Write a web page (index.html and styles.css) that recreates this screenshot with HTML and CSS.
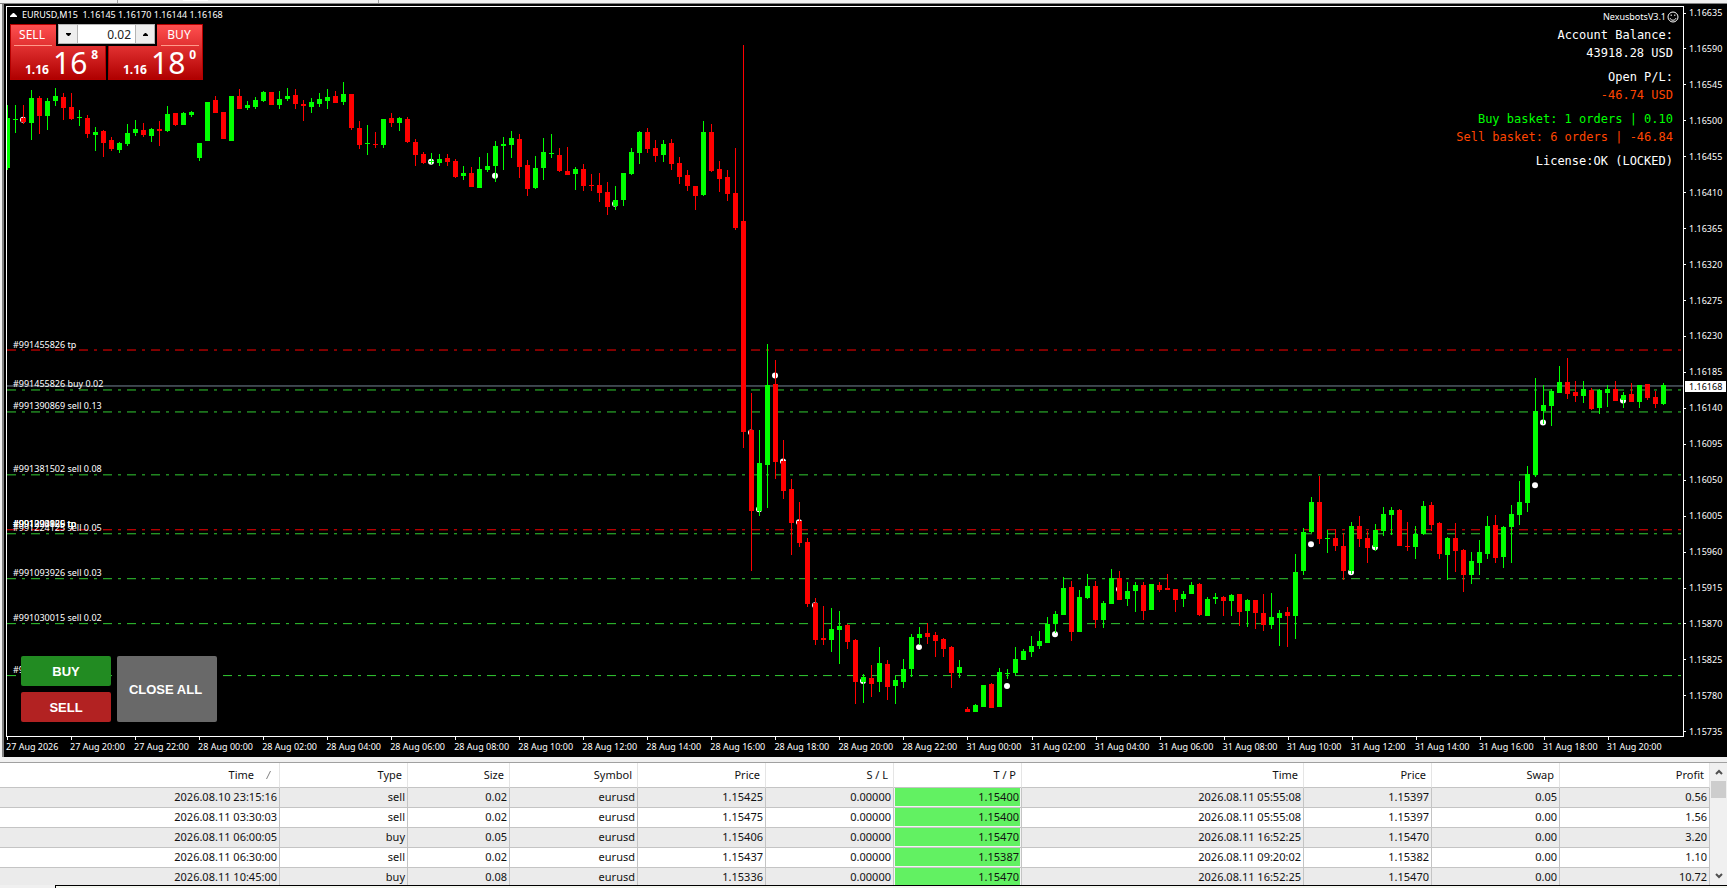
FILE: index.html
```html
<!DOCTYPE html>
<html lang="en">
<head>
<meta charset="utf-8">
<title>EURUSD,M15</title>
<link rel="stylesheet" href="styles.css">
</head>
<body>
<div class="app">
  <div class="tabstrip"><span class="tabstrip-a"></span><span class="tabstrip-b"></span><span class="tabstrip-active"></span><span class="tabstrip-c"></span></div>
  <main class="chart">
    <section class="plot" id="plot">
      <svg class="candles" id="candles" viewBox="7 7 1676 730" preserveAspectRatio="none" aria-hidden="true"></svg>
      <h1 class="title"><svg class="title-arrow" viewBox="0 0 7 4" aria-hidden="true"><path d="M3 0h1l3 3v1H0V3z"/></svg><span class="title-text">EURUSD,M15&nbsp; 1.16145 1.16170 1.16144 1.16168</span></h1>
      <div class="oneclick">
        <button class="side"><span class="side-name">SELL</span><span class="quote"><span class="q-small">1.16</span><span class="q-big">16</span><span class="q-sup">8</span></span></button>
        <button class="side side-buy"><span class="side-name">BUY</span><span class="quote"><span class="q-small">1.16</span><span class="q-big">18</span><span class="q-sup">0</span></span></button>
        <div class="volume">
          <button class="step" aria-label="Decrease volume"><svg viewBox="0 0 5 3" width="5" height="3"><path d="M0 0h5v1L3 3H2L0 1z"/></svg></button>
          <input class="volume-input" type="text" value="0.02" aria-label="Volume">
          <button class="step" aria-label="Increase volume"><svg viewBox="0 0 5 3" width="5" height="3"><path d="M0 3h5V2L3 0H2L0 2z"/></svg></button>
        </div>
      </div>
      <div class="account">
        <p class="bot">NexusbotsV3.1<svg class="smiley" viewBox="0 0 12 12" aria-hidden="true"><circle cx="6" cy="6" r="5"/><path d="M3 7.2c.6 1.4 1.7 2 3 2s2.400-.6 3-2"/><path d="M4.200 3.500v1.500M7.800 3.500v1.500"/></svg></p>
        <p class="stat"><span>Account Balance:</span><span>43918.28 USD</span></p>
        <p class="stat"><span>Open P/L:</span><span class="loss">-46.74 USD</span></p>
        <p class="stat"><span class="gain">Buy basket: 1 orders | 0.10</span><span class="loss">Sell basket: 6 orders | -46.84</span></p>
        <p class="stat"><span>License:OK (LOCKED)</span></p>
      </div>
      <div class="actions">
        <button class="action action-buy">BUY</button>
        <button class="action action-close">CLOSE ALL</button>
        <button class="action action-sell">SELL</button>
      </div>
    </section>
    <div class="prices" id="prices"></div>
    <div class="times" id="times"></div>
  </main>
  <section class="history">
    <div class="table-clip">
    <table class="trades">
      <colgroup><col class="c-open"><col class="c-std"><col class="c-size"><col class="c-std"><col class="c-std"><col class="c-std"><col class="c-std"><col><col class="c-std"><col class="c-std"><col class="c-profit"></colgroup>
      <thead><tr><th class="sorted">Time<svg class="sort" viewBox="0 0 5 8" aria-hidden="true"><path d="M.5 8 4.500 0"/></svg></th><th>Type</th><th>Size</th><th>Symbol</th><th>Price</th><th>S / L</th><th>T / P</th><th>Time</th><th>Price</th><th>Swap</th><th>Profit</th></tr></thead>
      <tbody>
        <tr><td>2026.08.10 23:15:16</td><td>sell</td><td>0.02</td><td>eurusd</td><td>1.15425</td><td>0.00000</td><td class="hit">1.15400</td><td>2026.08.11 05:55:08</td><td>1.15397</td><td>0.05</td><td>0.56</td></tr>
        <tr><td>2026.08.11 03:30:03</td><td>sell</td><td>0.02</td><td>eurusd</td><td>1.15475</td><td>0.00000</td><td class="hit">1.15400</td><td>2026.08.11 05:55:08</td><td>1.15397</td><td>0.00</td><td>1.56</td></tr>
        <tr><td>2026.08.11 06:00:05</td><td>buy</td><td>0.05</td><td>eurusd</td><td>1.15406</td><td>0.00000</td><td class="hit">1.15470</td><td>2026.08.11 16:52:25</td><td>1.15470</td><td>0.00</td><td>3.20</td></tr>
        <tr><td>2026.08.11 06:30:00</td><td>sell</td><td>0.02</td><td>eurusd</td><td>1.15437</td><td>0.00000</td><td class="hit">1.15387</td><td>2026.08.11 09:20:02</td><td>1.15382</td><td>0.00</td><td>1.10</td></tr>
        <tr><td>2026.08.11 10:45:00</td><td>buy</td><td>0.08</td><td>eurusd</td><td>1.15336</td><td>0.00000</td><td class="hit">1.15470</td><td>2026.08.11 16:52:25</td><td>1.15470</td><td>0.00</td><td>10.72</td></tr>
      </tbody>
    </table>
    </div>
    <div class="scroll">
      <button class="scroll-btn" aria-label="Scroll up"><svg viewBox="0 0 8 6" width="8" height="6"><path d="M1 5l3-3 3 3"/></svg></button>
      <span class="thumb"></span>
      <button class="scroll-btn scroll-down" aria-label="Scroll down"><svg viewBox="0 0 8 6" width="8" height="6"><path d="M1 1l3 3 3-3"/></svg></button>
    </div>
  </section>
  <div class="foot"></div>
</div>
<script src="chart.js"></script>
</body>
</html>
```
FILE: chart.js
```js
// Each bar: direction (G up, R down), high, body top, body bottom, low.
const bars = `G105 118 168 170,G105 119 120 133,R105 118 122 124,G90 98 123 140,R96 98 116 134,G98 101 116 130,G88 96 101 106,R93 97 108 120,R93 107 119 120,G110 117 118 126,
R115 118 134 138,G127 132 135 151,R130 131 143 157,R137 140 149 151,G142 143 150 153,G124 133 144 146,G120 129 133 136,R123 130 135 137,G128 129 136 142,R121 129 131 146,
G106 114 131 132,R113 113 125 126,G112 113 125 125,G111 112 115 117,G143 143 158 161,G102 102 141 141,R96 100 113 113,R112 112 139 139,G96 96 141 141,R89 96 109 109,
G101 105 108 110,G97 100 107 109,G91 92 101 102,R92 92 105 105,G91 99 105 109,G88 96 99 101,R89 95 104 109,R100 104 106 121,G98 102 107 113,G93 99 104 107,
G89 97 101 109,R91 96 103 103,G82 94 102 105,R94 94 128 130,R121 128 145 149,G125 143 144 155,R132 144 145 148,G119 119 145 148,R113 118 123 127,G117 118 123 131,
R117 119 142 143,R139 142 155 166,R152 154 163 164,G153 161 162 164,G154 159 163 166,R154 158 162 166,R159 161 177 178,G166 173 176 180,R167 173 187 187,G157 169 188 188,
G153 166 170 172,G141 146 166 182,G137 144 146 170,G131 138 145 158,R134 139 167 178,R160 165 189 196,G156 168 188 189,G138 152 168 180,G134 153 154 158,R148 155 171 172,
R147 171 175 175,G167 169 174 190,R164 169 186 191,R174 185 186 191,R173 185 193 202,R182 192 207 215,G186 200 206 210,G173 173 200 206,G148 152 174 175,G131 132 153 164,
R128 132 149 153,R140 148 156 162,G140 144 155 162,R139 143 164 170,R157 163 177 184,R170 175 186 191,R186 186 196 210,G121 132 195 196,R124 132 171 172,R161 169 179 192,
R170 177 194 201,R148 193 228 230,R45 221 433 449,R394 431 512 572,G431 464 512 517,G344 386 466 509,R360 385 463 480,R441 462 492 500,R480 490 524 556,R503 522 544 548,
R539 543 605 608,R599 604 641 646,R607 639 641 646,G609 630 641 653,G612 627 631 665,R625 626 643 650,R640 641 683 705,G675 678 683 704,R666 679 685 698,G648 664 683 693,
R661 665 688 701,G677 681 687 705,G660 670 683 689,G635 638 670 678,G628 635 639 646,R624 634 638 645,R633 636 642 658,R639 640 650 658,R647 648 674 689,G661 668 674 679,
R708 710 713 713,G705 706 713 713,G686 686 708 708,R684 685 709 709,G669 673 708 708,G670 674 675 680,G648 660 674 676,G650 652 661 661,G637 647 653 658,G632 642 647 650,
G618 625 644 644,G612 615 625 634,G578 589 616 616,R582 588 633 642,G591 598 633 633,G575 587 599 600,R582 587 621 629,G602 604 621 629,G570 579 605 605,R572 579 601 601,
G583 592 600 607,G583 586 592 613,R583 586 612 621,G585 585 611 611,R583 586 591 593,R575 589 591 591,R590 590 601 613,G592 595 600 608,G583 586 595 595,R584 585 616 617,
G598 600 617 617,G594 598 600 605,R597 598 602 617,G595 596 602 617,R595 595 613 627,G600 601 612 628,R601 601 614 630,R595 614 626 632,G594 618 626 630,G611 614 619 647,
R608 613 617 648,G555 573 617 640,G529 533 572 576,G498 503 533 534,R477 503 540 545,G531 539 540 554,R530 539 547 552,R534 547 572 581,G523 527 572 575,R517 527 540 548,
R532 539 549 564,G525 531 548 552,G508 515 532 537,G508 511 516 536,R510 511 547 547,R523 547 548 552,G527 535 548 560,G502 507 535 536,R503 506 526 532,R523 524 555 560,
G538 539 556 581,R524 539 552 573,R550 551 576 593,G553 562 576 585,G541 553 564 576,G517 527 555 560,R516 526 559 564,G527 528 558 569,G506 515 528 564,G482 503 516 526,
G467 475 504 513,G379 412 476 478,G386 406 412 425,G390 392 407 427,G366 383 394 394,R358 383 395 400,R382 393 397 403,G382 390 397 404,R389 391 410 411,G390 391 409 415,
G386 390 394 408,R382 390 402 402,G393 396 401 409,R384 395 403 403,G386 386 403 409,R385 385 399 401,R392 398 405 409,G384 386 405 406`.replace(/\n/g, '').split(',');

// Signal dots: bar index, y.
const dots = [[2,120],[53,162],[61,176],[76,204],[93,433],[94,510],[96,376],[97,462],[99,523],[101,606],[107,682],[114,648],[125,687],[131,635],[139,590],[163,545],[168,573],[171,548],[191,486],[192,423],[202,401]];

// Order levels: y, line colour, captions.
const levels = [
  [350, 'red', ['#991455826 tp']],
  [390, 'limegreen', ['#991455826 buy 0.02']],
  [412, 'limegreen', ['#991390869 sell 0.13']],
  [475, 'limegreen', ['#991381502 sell 0.08']],
  [534, 'limegreen', ['#991224125 sell 0.05']],
  [530, 'red', ['#991390869 tp', '#991093926 tp', '#991224125 tp']],
  [579, 'limegreen', ['#991093926 sell 0.03']],
  [624, 'limegreen', ['#991030015 sell 0.02']],
  [676, 'limegreen', ['#990986412 sell 0.01']]
];

const barX = i => 7 + i * 8;
let art = '<path class="bid" d="M7 386.5H1683"/>';
for (const [y, color] of levels) art += `<path class="level" stroke="${color}" d="M7 ${y}.5H1682"/>`;
for (const [i, y] of dots) art += `<circle class="dot" cx="${barX(i)}" cy="${y}" r="3"/>`;
bars.forEach((bar, i) => {
  const [high, top, bottom, low] = bar.slice(1).split(' ').map(Number);
  const x = barX(i);
  art += `<path class="${bar[0] === 'G' ? 'up' : 'down'}" d="M${x} ${high}h1V${low}h-1zM${x - 2} ${top}h5V${bottom}h-5z"/>`;
});
document.getElementById('candles').innerHTML = art;

const plot = document.getElementById('plot');
for (const [y, , captions] of levels) {
  for (const text of captions) {
    const label = document.createElement('span');
    label.className = 'order';
    label.textContent = text;
    label.style.top = `${(y - 6) / 730 * 100}%`;
    plot.insertBefore(label, plot.children[1]);
  }
}

const prices = document.getElementById('prices');
for (let i = 0; i < 21; i++) {
  const label = document.createElement('span');
  label.className = 'price';
  label.textContent = ((116635 - i * 45) / 100000).toFixed(5);
  prices.append(label);
}
const bid = document.createElement('span');
bid.className = 'price-now';
bid.textContent = '1.16168';
bid.style.top = `${(386 - 6) / 732 * 100}%`;
prices.append(bid);

const times = document.getElementById('times');
const stamps = ['27 Aug 2026', '27 Aug 20:00', '27 Aug 22:00'];
for (let h = 0; h < 24; h += 2) stamps.push(`28 Aug ${String(h).padStart(2, '0')}:00`);
for (let h = 0; h < 22; h += 2) stamps.push(`31 Aug ${String(h).padStart(2, '0')}:00`);
for (const text of stamps) {
  const label = document.createElement('span');
  label.className = 'time';
  label.textContent = text;
  times.append(label);
}
```
FILE: styles.css
```css
* { box-sizing: border-box; }
body { margin: 0; font-family: "Noto Sans", "Open Sans", sans-serif; background: #f0f0f0; }
button, input { font: inherit; margin: 0; padding: 0; border: 0; border-radius: 0; }
p, h1 { margin: 0; font-weight: 400; }

.app { display: flex; flex-direction: column; height: 100vh; overflow: hidden; }

.tabstrip { display: flex; flex: none; height: 4px; background: #f0f0f0; border-bottom: 1px solid #828282; }
.tabstrip-a { width: 118px; border-right: 1px solid #a0a0a0; }
.tabstrip-b { width: 65px; }
.tabstrip-active { width: 25px; height: 1px; background: #fff; }
.tabstrip-c { width: 171px; border-right: 1px solid #a0a0a0; }

.chart {
  flex: 1; min-height: 0; display: grid;
  grid-template-columns: minmax(0, 1fr) 43px;
  grid-template-rows: minmax(0, 1fr) 20px;
  padding: 2px 0 0 2px; margin-left: 2px;
  background: #000; color: #fff; border-left: 2px solid #828282;
  font-size: 9px; line-height: 12px;
}
.plot { position: relative; border: 1px solid #fff; min-width: 0; overflow: hidden; }
.candles { position: absolute; inset: 0; width: 100%; height: 100%; shape-rendering: crispEdges; }
.up { fill: #0f0; }
.down { fill: #f00; }
.dot { fill: #fff; shape-rendering: auto; }
.bid { stroke: #778899; fill: none; }
.level { fill: none; stroke-dasharray: 9 6 3 6; }
.order { position: absolute; left: 6px; transform: translateY(-100%); white-space: nowrap; }

.title { position: relative; display: flex; align-items: center; gap: 5px; height: 16px; padding-left: 3px; font-size: 9px; }
.title-arrow { width: 7px; height: 4px; fill: #fff; }

.oneclick { position: absolute; left: 3px; top: 17px; width: 193px; display: grid; grid-template-columns: 96px 95px; gap: 2px; background: #000; }
.side {
  display: flex; flex-direction: column; height: 56px; padding: 0 3px; color: #fff;
  background: linear-gradient(#ff4f4f, #e03030 40%, #b00000); border: 1px solid #b40000;
}
.side-name { width: 38px; height: 21px; padding-right: 2px; font-size: 12px; line-height: 20px; border-bottom: 1px solid #ff9a8a; }
.side-buy .side-name { align-self: flex-end; }
.quote { display: flex; align-items: flex-end; align-self: stretch; height: 34px; padding-left: 11px; gap: 4px; }
.q-small { font-size: 12px; font-weight: 700; line-height: 21px; }
.q-big { font-size: 30px; line-height: 34px; }
.q-sup { align-self: flex-start; font-size: 12px; font-weight: 700; line-height: 17px; }
.volume { position: absolute; left: 46px; right: 46px; top: 0; height: 22px; padding: 0 2px 2px; display: flex; background: #000; }
.step { width: 20px; display: grid; place-items: center; background: #eee; border: 1px solid #b4b4b4; }
.volume-input { flex: 1; min-width: 0; padding-right: 4px; text-align: right; font-size: 12px; background: #fff; border: 1px solid #b4b4b4; border-width: 1px 0; color: #222; }

.account { position: absolute; right: 10px; top: 3px; text-align: right; font-family: "DejaVu Sans Mono", monospace; font-size: 12px; line-height: 18px; }
.bot { display: flex; justify-content: flex-end; align-items: center; gap: 1px; height: 13px; margin-right: -6px; margin-bottom: 3px; font: 9px/12px "Noto Sans", sans-serif; }
.smiley { width: 12px; height: 12px; fill: none; stroke: #fff; }
.stat { display: flex; flex-direction: column; margin-bottom: 6px; }
.gain { color: #0f0; }
.loss { color: #ff4500; }

.actions { position: absolute; left: 14px; bottom: 14px; display: grid; grid-template: 30px 30px / 90px 100px; gap: 6px; font: 700 13px/16px "Liberation Sans", Arial, sans-serif; }
.action { color: #fff; border-radius: 2px; padding-top: 1px; }
.action-buy { background: #228b22; }
.action-sell { background: #b22222; }
.action-close { grid-row: 1 / 3; grid-column: 2; padding-right: 3px; background: #696969; }

.prices { position: relative; display: flex; flex-direction: column; justify-content: space-between; padding-top: 1px; margin-bottom: -1px; }
.price { display: flex; align-items: center; }
.price::before { content: ""; width: 2px; height: 1px; margin-right: 3px; background: #fff; }
.price-now { position: absolute; left: 1px; right: 1px; height: 11px; margin-top: -5px; padding-left: 4px; line-height: 11px; background: #fff; color: #000; }

.times { display: flex; grid-column: 1; padding-left: 1px; white-space: nowrap; }
.time { position: relative; flex: 0 0 calc(100% * 64 / 1676); padding-top: 4px; text-indent: -1px; }
.time::before { content: ""; position: absolute; left: 0; top: 0; width: 1px; height: 3px; background: #fff; }

.history { flex: none; display: flex; height: 127px; margin-top: 1px; border-top: 4px solid #f0f0f0; background: #fff; }
.table-clip { flex: 1; min-width: 0; overflow: hidden; border-top: 1px solid #a0a0a0; }
.trades { width: 100%; table-layout: fixed; border-collapse: separate; border-spacing: 0; font-size: 11px; line-height: 18px; color: #111; }
.c-open { width: 280px; }
.c-std { width: 128px; }
.c-size { width: 102px; }
.c-profit { width: 150px; }
th { height: 25px; padding: 0 5px 0 0; text-align: right; font-weight: 400; border-right: 1px solid #e5e5e5; border-bottom: 1px solid #c4c4c4; }
.sorted { padding-right: 8px; }
.sort { width: 5px; height: 8px; margin-left: 12px; fill: none; stroke: #808080; }
td { height: 20px; padding: 0 2px 1px 0; text-align: right; border-right: 1px solid #c4c4c4; border-bottom: 1px solid #c4c4c4; white-space: nowrap; }
tbody tr:nth-child(odd) { background: #ebebeb; }
.hit { background: #62f162; box-shadow: inset 1px -1px #f4f4f4, inset -1px 0 #f4f4f4; }
.scroll { flex: none; display: flex; flex-direction: column; width: 17px; background: #f0f0f0; border-top: 1px solid #a0a0a0; }
.scroll-btn { display: grid; place-items: center; height: 18px; background: none; }
.scroll-btn svg { fill: none; stroke: #505050; stroke-width: 2; }
.thumb { height: 17px; margin: 0 1px; background: #cdcdcd; }
.scroll-down { margin-top: auto; }
.foot { flex: none; height: 3px; margin-left: 55px; background: #f4f6f0; border-top: 1px solid #000; border-left: 1px solid #000; }
```
